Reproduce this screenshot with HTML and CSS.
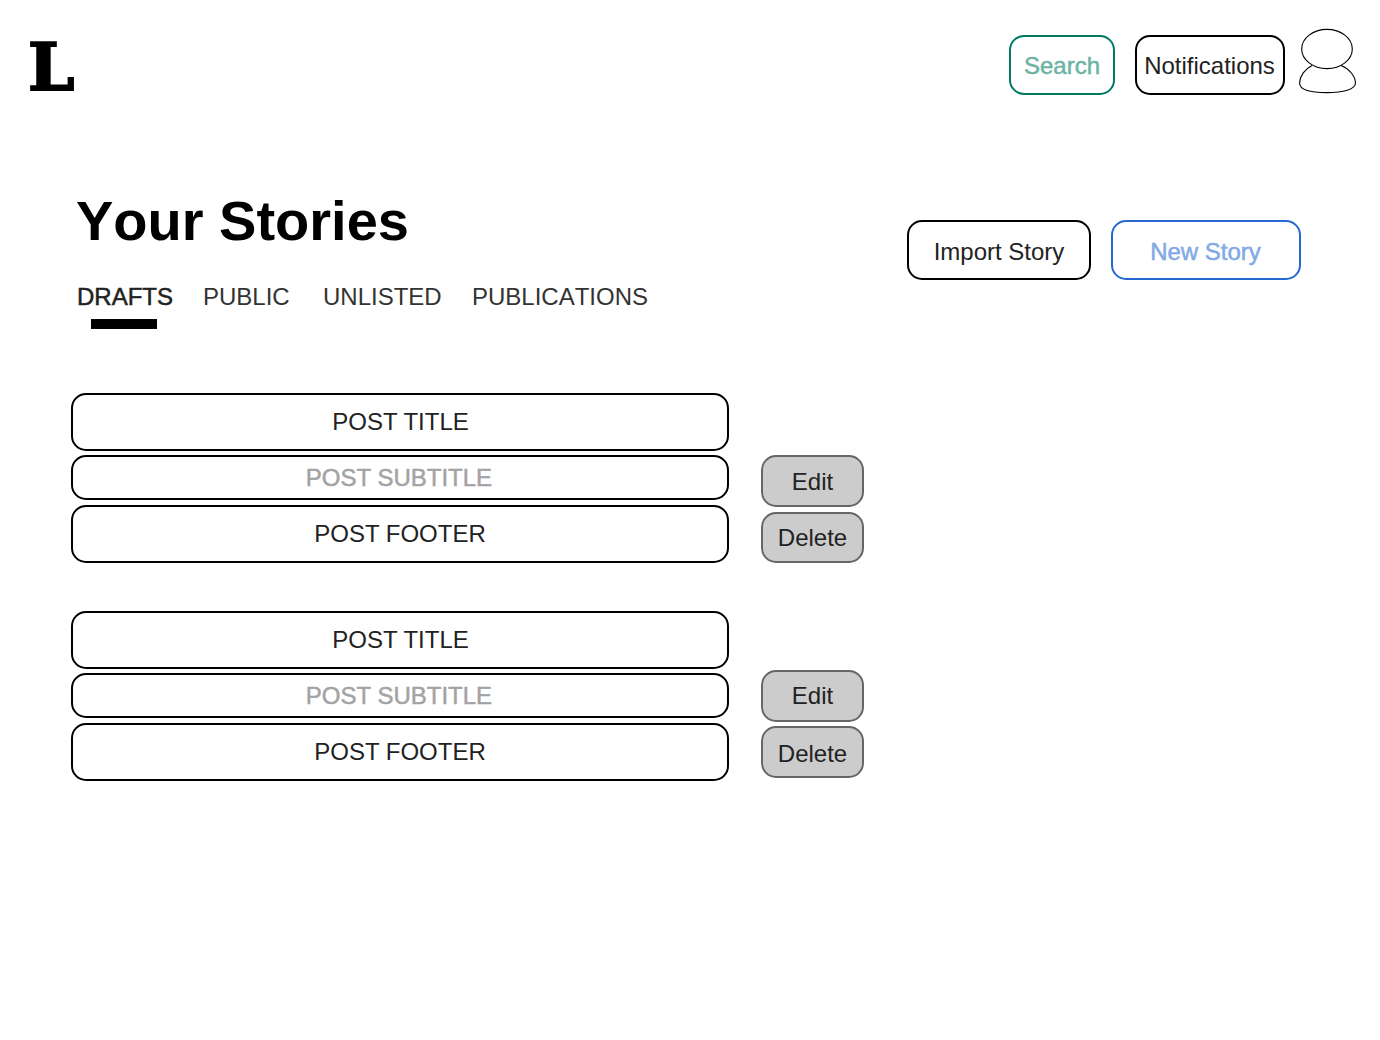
FILE: index.html
```html
<!DOCTYPE html>
<html lang="en">
<head>
<meta charset="utf-8">
<title>Your Stories</title>
<link rel="stylesheet" href="styles.css">
</head>
<body>
<header class="topbar">
  <a class="logo">L</a>
  <nav class="topnav">
    <a class="box search"><span>Search</span></a>
    <a class="box notifications"><span>Notifications</span></a>
    <svg class="avatar" width="60" height="68" viewBox="0 0 60 68" fill="#fff" stroke="#000" stroke-width="1.1">
      <path d="M15 38.5C8 42 2.8 49 2.6 56C2.4 62.5 12 65.6 30 65.6C46 65.6 58.5 62.5 58.5 56C58.3 49 52 41.5 44 38.5"/>
      <ellipse cx="30" cy="22" rx="25.3" ry="19.6"/>
    </svg>
  </nav>
</header>
<main class="page">
  <section class="heading">
    <div class="intro">
      <h1 class="title">Your Stories</h1>
      <nav class="tabs">
        <a class="tab drafts active">DRAFTS</a>
        <a class="tab public">PUBLIC</a>
        <a class="tab unlisted">UNLISTED</a>
        <a class="tab publications">PUBLICATIONS</a>
      </nav>
    </div>
    <div class="story-actions">
      <a class="box import"><span>Import Story</span></a>
      <a class="box new"><span>New Story</span></a>
    </div>
  </section>
  <section class="posts">
    <article class="post">
      <div class="post-body">
        <div class="box post-title"><span>POST TITLE</span></div>
        <div class="box post-subtitle"><span>POST SUBTITLE</span></div>
        <div class="box post-footer"><span>POST FOOTER</span></div>
      </div>
      <div class="post-actions first">
        <a class="box action edit"><span>Edit</span></a>
        <a class="box action delete"><span>Delete</span></a>
      </div>
    </article>
    <article class="post">
      <div class="post-body">
        <div class="box post-title"><span>POST TITLE</span></div>
        <div class="box post-subtitle"><span>POST SUBTITLE</span></div>
        <div class="box post-footer"><span>POST FOOTER</span></div>
      </div>
      <div class="post-actions second">
        <a class="box action edit"><span>Edit</span></a>
        <a class="box action delete"><span>Delete</span></a>
      </div>
    </article>
  </section>
</main>
</body>
</html>
```
FILE: styles.css
```css
* { box-sizing: border-box; }
body {
  margin: 0;
  background: #fff;
  color: #222;
  font: 24px/28px "Liberation Sans", Arial, sans-serif;
}
.topbar {
  display: flex;
  justify-content: space-between;
  align-items: flex-start;
  height: 190px;
  padding: 27px 23px 0 28px;
}
.logo {
  padding-top: 7px;
  font: bold 66px/66px "DejaVu Serif", serif;
  color: #000;
  -webkit-text-stroke: 2px #000;
}
.topnav { display: flex; align-items: flex-start; }
.box {
  display: flex;
  align-items: center;
  justify-content: center;
  border: 2px solid #000;
  border-radius: 15px;
  white-space: nowrap;
}
.search, .notifications { height: 60px; margin-top: 8px; padding-top: 2px; }
.search {
  width: 106px;
  margin-right: 20px;
  border-color: #007a62;
  color: #6db3a4;
  -webkit-text-stroke: 0.5px #6db3a4;
}
.notifications { width: 150px; margin-right: 12px; padding-right: 1px; }
.avatar { display: block; }
.page { padding: 0 79px 0 71px; }
.heading {
  display: flex;
  justify-content: space-between;
  align-items: flex-start;
  height: 203px;
}
.title {
  margin: 0;
  padding: 1px 0 0 5px;
  font-size: 56px;
  line-height: 60px;
  font-weight: bold;
  font-kerning: none;
  color: #000;
}
.tabs { display: flex; padding: 32px 0 0 6px; font-kerning: none; }
.tab { color: #333; }
.drafts { width: 126px; color: #222; -webkit-text-stroke: 0.5px #222; }
.public { width: 120px; }
.unlisted { width: 149px; }
.active::after {
  content: "";
  display: block;
  width: 66px;
  height: 10px;
  margin: 8px 0 0 14px;
  background: #000;
}
.story-actions { display: flex; gap: 20px; padding-top: 30px; }
.import, .new { height: 60px; padding-top: 3px; }
.import { width: 184px; }
.new {
  width: 190px;
  border-color: #2569d0;
  color: #82a9e5;
  padding-right: 1px;
  -webkit-text-stroke: 0.5px #82a9e5;
}
.posts { display: flex; flex-direction: column; gap: 48px; }
.post { display: flex; gap: 32px; }
.post-body { width: 658px; }
.post-title { height: 58px; margin-bottom: 4px; padding-left: 1px; }
.post-subtitle {
  height: 45px;
  margin-bottom: 5px;
  padding-right: 2px;
  color: #a3a3a3;
  -webkit-text-stroke: 0.5px #a3a3a3;
}
.post-footer { height: 58px; }
.action { width: 103px; background: #ccc; border-color: #666; }
.edit { height: 52px; }
.first { padding-top: 62px; }
.first .edit { margin-bottom: 5px; padding-top: 2px; }
.first .delete { height: 51px; }
.second { padding-top: 59px; }
.second .edit { margin-bottom: 4px; }
.second .delete { height: 52px; padding-top: 3px; }
```
